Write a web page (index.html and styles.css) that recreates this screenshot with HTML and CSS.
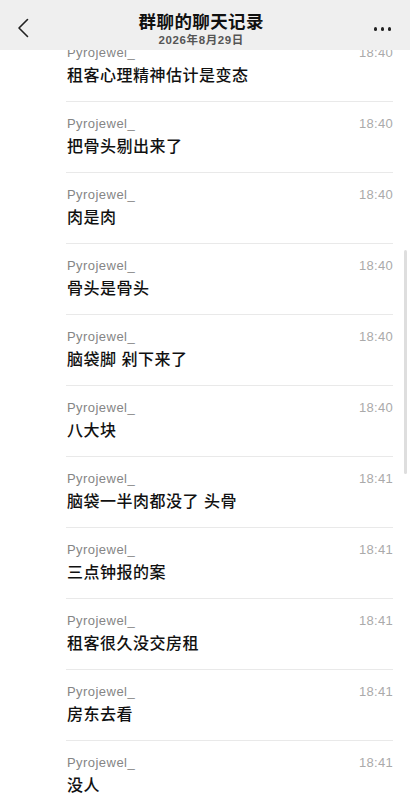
FILE: index.html
```html
<!DOCTYPE html>
<html lang="zh-CN">
  <head>
    <meta charset="UTF-8" />
    <meta name="viewport" content="width=device-width, initial-scale=1.0" />
    <title>群聊的聊天记录</title>
    <link rel="stylesheet" href="styles.css">
  </head>
  <body>
    <header class="topbar">
      <svg class="back" width="12" height="20" viewBox="0 0 12 20">
        <path d="M10.5 1.5 L2 10 L10.5 18.5" fill="none" stroke="#222" stroke-width="1.6" stroke-linecap="round" stroke-linejoin="round" />
      </svg>
      <div class="title-block">
        <div class="title">群聊的聊天记录</div>
        <div class="date">2026年8月29日</div>
      </div>
      <div class="more"><span></span><span></span><span></span></div>
    </header>

    <main class="list">
      <div class="item">
        <div class="meta"><span class="name">Pyrojewel_</span><span class="time">18:40</span></div>
        <div class="text">租客心理精神估计是变态</div>
      </div>
      <div class="item">
        <div class="meta"><span class="name">Pyrojewel_</span><span class="time">18:40</span></div>
        <div class="text">把骨头剔出来了</div>
      </div>
      <div class="item">
        <div class="meta"><span class="name">Pyrojewel_</span><span class="time">18:40</span></div>
        <div class="text">肉是肉</div>
      </div>
      <div class="item">
        <div class="meta"><span class="name">Pyrojewel_</span><span class="time">18:40</span></div>
        <div class="text">骨头是骨头</div>
      </div>
      <div class="item">
        <div class="meta"><span class="name">Pyrojewel_</span><span class="time">18:40</span></div>
        <div class="text">脑袋脚 剁下来了</div>
      </div>
      <div class="item">
        <div class="meta"><span class="name">Pyrojewel_</span><span class="time">18:40</span></div>
        <div class="text">八大块</div>
      </div>
      <div class="item">
        <div class="meta"><span class="name">Pyrojewel_</span><span class="time">18:41</span></div>
        <div class="text">脑袋一半肉都没了 头骨</div>
      </div>
      <div class="item">
        <div class="meta"><span class="name">Pyrojewel_</span><span class="time">18:41</span></div>
        <div class="text">三点钟报的案</div>
      </div>
      <div class="item">
        <div class="meta"><span class="name">Pyrojewel_</span><span class="time">18:41</span></div>
        <div class="text">租客很久没交房租</div>
      </div>
      <div class="item">
        <div class="meta"><span class="name">Pyrojewel_</span><span class="time">18:41</span></div>
        <div class="text">房东去看</div>
      </div>
      <div class="item">
        <div class="meta"><span class="name">Pyrojewel_</span><span class="time">18:41</span></div>
        <div class="text">没人</div>
      </div>
    </main>

    <div class="scrollbar"></div>
  </body>
</html>
```

FILE: styles.css
```css
* {
  box-sizing: border-box;
  margin: 0;
  padding: 0;
}

body {
  font-family: "Liberation Sans", "Noto Sans CJK SC", sans-serif;
  background-color: #fff;
  color: #1a1a1a;
  width: 410px;
  height: 800px;
  overflow: hidden;
}

/* header sits over the scrolled list */
.topbar {
  position: fixed;
  top: 0;
  left: 0;
  right: 0;
  height: 50px;
  background-color: #efefef;
  display: flex;
  align-items: center;
  justify-content: space-between;
  padding: 0 19px 0 17px;
  z-index: 2;
}

.back {
  margin-top: 6px;
}

.title-block {
  text-align: center;
  margin-top: 7px;
}

.title {
  font-size: 17.5px;
  font-weight: bold;
  letter-spacing: 0.4px;
  line-height: 22px;
  color: #111;
}

.date {
  font-size: 11.5px;
  font-weight: bold;
  color: #555;
  letter-spacing: 0.6px;
  line-height: 14px;
}

.more {
  display: flex;
  gap: 3.5px;
  margin-top: 8px;
}

.more span {
  width: 3.5px;
  height: 3.5px;
  border-radius: 50%;
  background-color: #222;
}

.list {
  padding-top: 30px;
}

.item {
  margin: 0 17px 0 66px;
  padding: 13px 0 14px 1px;
  border-top: 1px solid #e9e9e9;
}

.meta {
  display: flex;
  justify-content: space-between;
  align-items: center;
  height: 16px;
  font-size: 13px;
  letter-spacing: 0.45px;
}

.name {
  color: #858585;
}

.time {
  color: #aaa;
  letter-spacing: 0.3px;
}

.text {
  margin-top: 5px;
  font-size: 16px;
  font-weight: 500;
  line-height: 22px;
  letter-spacing: 0.5px;
  color: #111;
}

.scrollbar {
  position: fixed;
  top: 250px;
  left: 404px;
  width: 2.5px;
  height: 224px;
  border-radius: 2px;
  background-color: #dedede;
}
```
